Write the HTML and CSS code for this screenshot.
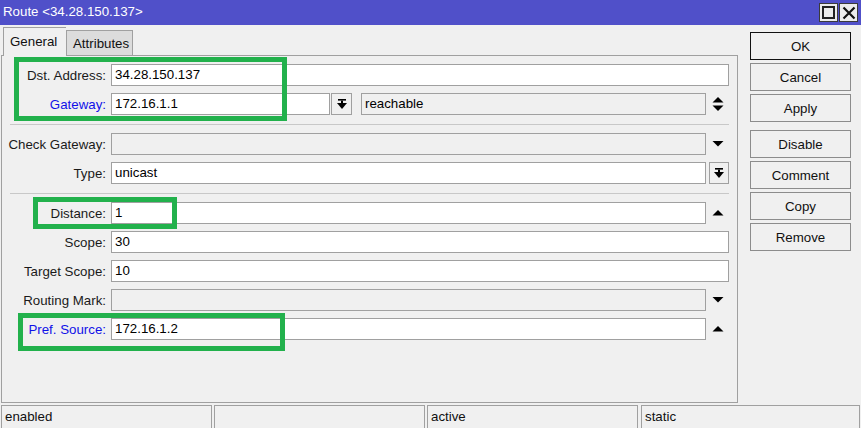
FILE: index.html
```html
<!DOCTYPE html>
<html>
<head>
<meta charset="utf-8">
<link rel="stylesheet" href="styles.css">
</head>
<body>
<div class="window">
  <div class="titlebar">
    <span class="title">Route &lt;34.28.150.137&gt;</span>
    <div class="tb-btns">
      <span class="tb-btn"><span class="max-box"></span></span>
      <span class="tb-btn">
        <svg width="14" height="14" viewBox="0 0 14 14"><path d="M1.5 1.5 L12.5 12.5 M12.5 1.5 L1.5 12.5" stroke="#111" stroke-width="2.2" fill="none"/></svg>
      </span>
    </div>
  </div>
  <div class="main">
    <div class="left">
      <div class="tabs">
        <div class="tab active">General</div>
        <div class="tab">Attributes</div>
      </div>
      <div class="panel">
        <div class="row">
          <label class="lbl">Dst. Address:</label>
          <div class="field">34.28.150.137</div>
        </div>
        <div class="row">
          <label class="lbl blue">Gateway:</label>
          <div class="field gw">172.16.1.1</div>
          <span class="sqbtn gwbtn"><svg width="10" height="11" viewBox="0 0 10 11"><rect x="1" y="0" width="8" height="1.6" fill="#000"/><rect x="4" y="1.6" width="2" height="3" fill="#000"/><polygon points="0,4 10,4 5,10" fill="#000"/></svg></span>
          <div class="field grey reach">reachable</div>
          <span class="icon"><svg width="12" height="14" viewBox="0 0 12 14"><polygon points="0.5,5.5 6,0 11.5,5.5" fill="#000"/><polygon points="0.5,8.5 11.5,8.5 6,14" fill="#000"/></svg></span>
        </div>
        <div class="sep"></div>
        <div class="row">
          <label class="lbl">Check Gateway:</label>
          <div class="field grey"></div>
          <span class="icon"><svg width="12" height="6" viewBox="0 0 12 6"><polygon points="0.5,0 11.5,0 6,5.5" fill="#000"/></svg></span>
        </div>
        <div class="row">
          <label class="lbl">Type:</label>
          <div class="field">unicast</div>
          <span class="sqbtn typebtn"><svg width="10" height="11" viewBox="0 0 10 11"><rect x="1" y="0" width="8" height="1.6" fill="#000"/><rect x="4" y="1.6" width="2" height="3" fill="#000"/><polygon points="0,4 10,4 5,10" fill="#000"/></svg></span>
        </div>
        <div class="sep"></div>
        <div class="row">
          <label class="lbl">Distance:</label>
          <div class="field">1</div>
          <span class="icon"><svg width="12" height="6" viewBox="0 0 12 6"><polygon points="0.5,5.5 11.5,5.5 6,0" fill="#000"/></svg></span>
        </div>
        <div class="row">
          <label class="lbl">Scope:</label>
          <div class="field">30</div>
        </div>
        <div class="row">
          <label class="lbl">Target Scope:</label>
          <div class="field">10</div>
        </div>
        <div class="row">
          <label class="lbl">Routing Mark:</label>
          <div class="field grey"></div>
          <span class="icon"><svg width="12" height="6" viewBox="0 0 12 6"><polygon points="0.5,0 11.5,0 6,5.5" fill="#000"/></svg></span>
        </div>
        <div class="row">
          <label class="lbl blue">Pref. Source:</label>
          <div class="field">172.16.1.2</div>
          <span class="icon"><svg width="12" height="6" viewBox="0 0 12 6"><polygon points="0.5,5.5 11.5,5.5 6,0" fill="#000"/></svg></span>
        </div>
      </div>
    </div>
    <div class="right">
      <div class="btn-group">
        <button class="btn default">OK</button>
        <button class="btn">Cancel</button>
        <button class="btn">Apply</button>
      </div>
      <div class="btn-group">
        <button class="btn">Disable</button>
        <button class="btn">Comment</button>
        <button class="btn">Copy</button>
        <button class="btn">Remove</button>
      </div>
    </div>
  </div>
  <div class="status">
    <div class="cell">enabled</div>
    <div class="cell"></div>
    <div class="cell">active</div>
    <div class="cell wide">static</div>
  </div>
  <div class="mark m1"></div>
  <div class="mark m2"></div>
  <div class="mark m3"></div>
</div>
</body>
</html>
```
FILE: styles.css
```css
* { box-sizing: border-box; }
html, body { margin: 0; padding: 0; }
body {
  background: #f0f0f0;
  font-family: "Liberation Sans", Arial, sans-serif;
  font-size: 13.3px;
  color: #111;
}
.window {
  position: relative;
  width: 861px;
  height: 428px;
  display: flex;
  flex-direction: column;
  overflow: hidden;
}
.titlebar {
  height: 25px;
  background: #5050c9;
  color: #fff;
  display: flex;
  align-items: center;
  justify-content: space-between;
  padding: 0 3px 1px 3px;
}
.title { line-height: 16px; margin-top: -1px; }
.tb-btns { display: flex; gap: 1px; margin-top: 1px; }
.tb-btn {
  width: 19px;
  height: 19px;
  background: #ececec;
  border: 1px solid #3a3a3a;
  display: flex;
  align-items: center;
  justify-content: center;
}
.max-box {
  width: 13px;
  height: 13px;
  border: 2px solid #222;
}
.main {
  display: flex;
  height: 380px;
}
.left {
  width: 738px;
  padding-top: 2px;
  display: flex;
  flex-direction: column;
}
.tabs {
  height: 28px;
  display: flex;
  align-items: flex-end;
  padding-left: 3px;
}
.tab {
  height: 25px;
  border: 1px solid #a0a0a0;
  border-bottom: none;
  background: #dcdcdc;
  padding: 5px 0 0 6px;
  width: 67px;
}
.tab.active {
  width: 63px;
  height: 29px;
  margin-bottom: -1px;
  background: #f0f0f0;
  padding: 6px 0 0 6px;
  position: relative;
  z-index: 1;
  border-right: none;
}
.panel {
  margin-left: 1px;
  width: 737px;
  height: 348px;
  border: 1px solid #a0a0a0;
  padding: 8px 8px 0 0;
  display: flex;
  flex-direction: column;
  gap: 7px;
}
.row {
  display: flex;
  height: 22px;
  align-items: center;
}
.lbl {
  width: 104px;
  margin-right: 5px;
  text-align: right;
  white-space: nowrap;
  color: #1a1a1a;
}
.lbl.blue { color: #1010e8; }
.field {
  flex: 1;
  height: 22px;
  background: #fff;
  border: 1px solid #a0a0a0;
  padding: 0 3px;
  line-height: 20px;
  color: #000;
}
.field.grey { background: #f0f0f0; }
.field.gw { flex: none; width: 219px; }
.field.reach { margin-left: 9px; }
.sqbtn {
  height: 22px;
  border: 1px solid #a0a0a0;
  background: #f0f0f0;
  display: flex;
  align-items: center;
  justify-content: center;
  padding-top: 1px;
}
.gwbtn { width: 21px; margin-left: 1px; }
.typebtn { width: 20px; margin-left: 3px; }
.icon {
  width: 23px;
  display: flex;
  align-items: center;
  justify-content: center;
  padding-left: 1px;
}
.sep {
  height: 1px;
  background: #c8c8c8;
  margin: 2px 0 1px 8px;
}
.right {
  width: 123px;
  padding: 7px 0 0 12px;
  display: flex;
  flex-direction: column;
  gap: 8px;
}
.btn-group {
  display: flex;
  flex-direction: column;
  gap: 3px;
}
.btn {
  width: 101px;
  height: 28px;
  background: #f0f0f0;
  border: 1px solid #8c8c8c;
  font-family: "Liberation Sans", Arial, sans-serif;
  font-size: 13.3px;
  color: #111;
  padding: 0;
  margin: 0;
}
.btn.default { border-color: #111; }
.status {
  height: 23px;
  display: flex;
  gap: 2px;
  padding-left: 1px;
}
.cell {
  width: 211px;
  border: 1px solid #a0a0a0;
  border-bottom: none;
  padding: 3px 0 0 3px;
  color: #111;
}
.cell.wide { width: 219px; margin-left: 1px; }
.mark {
  position: absolute;
  border: 5px solid #22b14c;
  pointer-events: none;
}
.m1 { left: 14px; top: 57px; width: 273px; height: 64px; }
.m2 { left: 33px; top: 197px; width: 144px; height: 32px; }
.m3 { left: 18px; top: 313px; width: 267px; height: 38px; }
```
